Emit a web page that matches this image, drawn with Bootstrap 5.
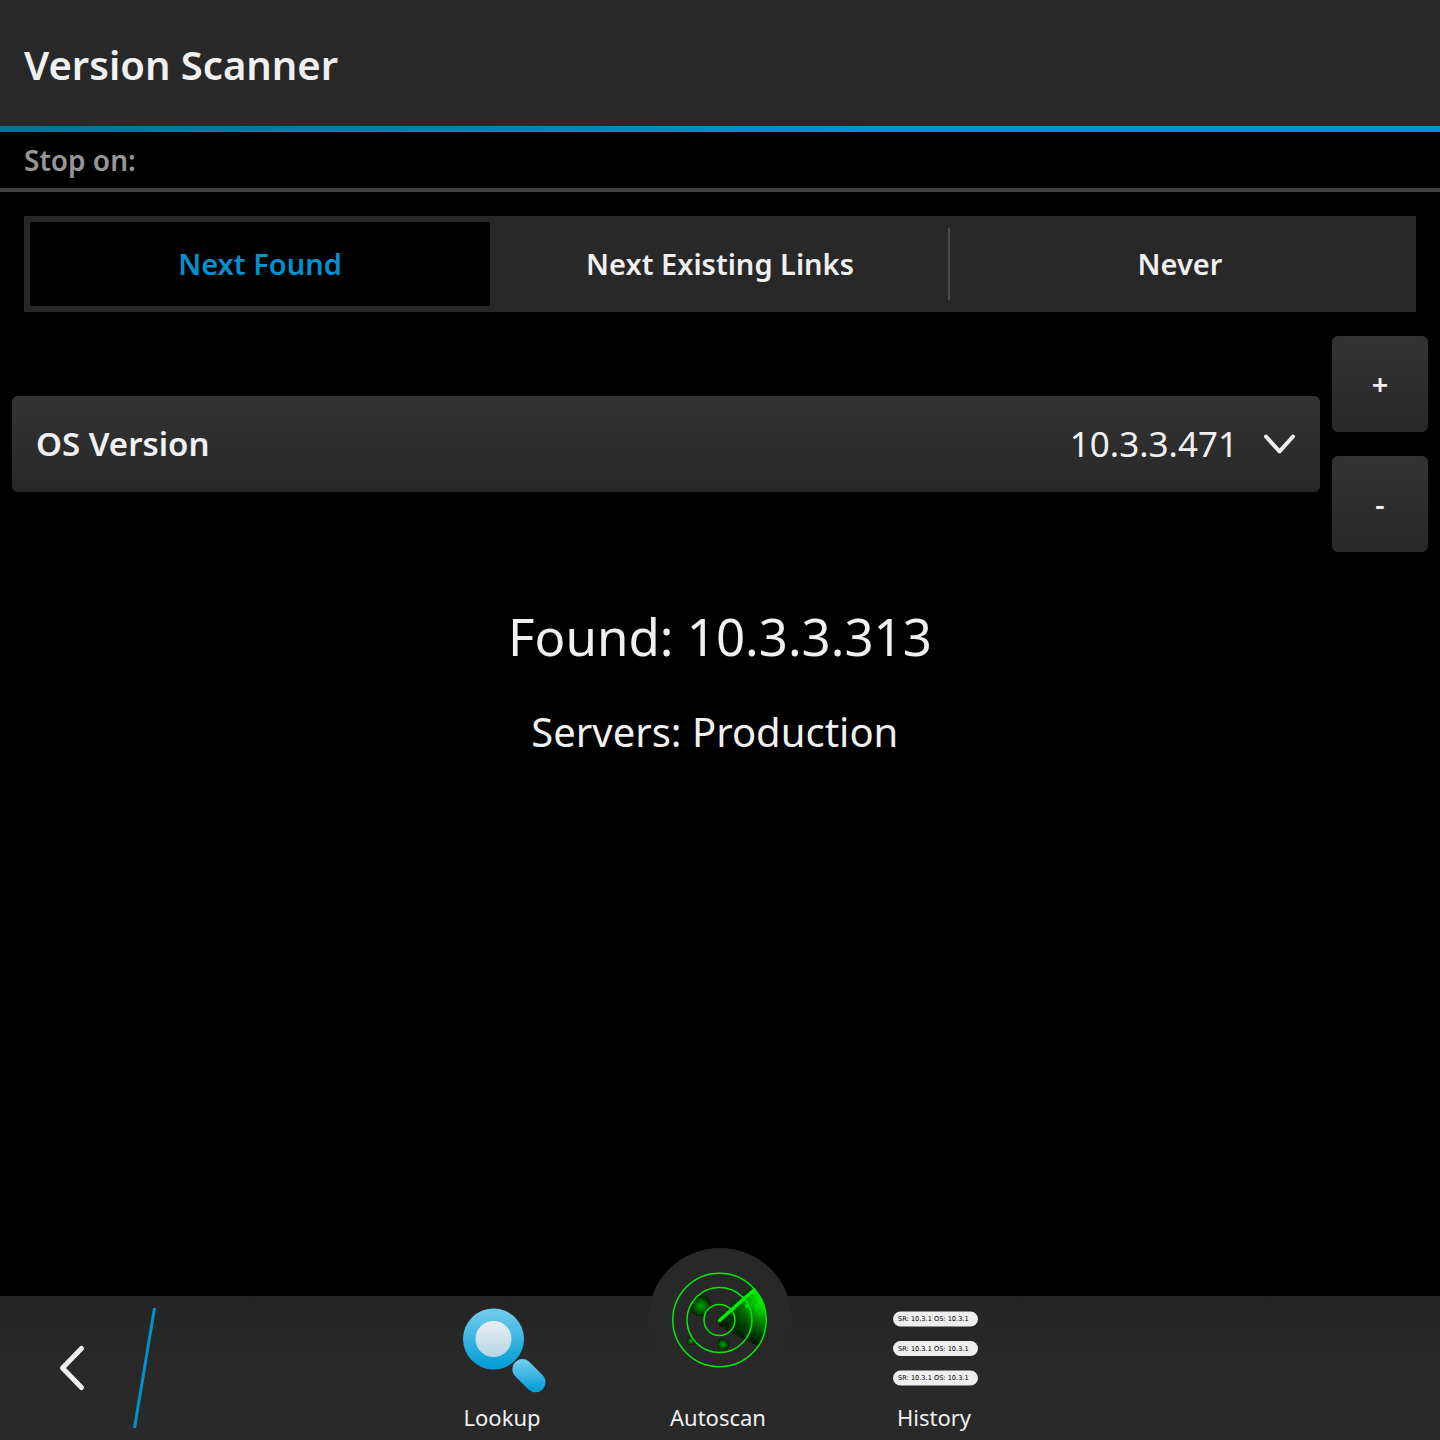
<!DOCTYPE html>
<html lang="en" data-bs-theme="dark">
<head>
<meta charset="utf-8">
<meta name="viewport" content="width=device-width, initial-scale=1">
<title>Version Scanner</title>
<link rel="stylesheet" href="https://cdn.jsdelivr.net/npm/bootstrap@5.3.0/dist/css/bootstrap.min.css">
<style>
  body { background: #000; color: #f0f0f0; font-family: "Noto Sans", "Open Sans", sans-serif; }
  .title-bar { background: #282828; padding: 35px 24px 31px; }
  .title-bar h1 { font-size: 40px; line-height: 60px; font-weight: 600; color: #f0f0f0; }
  .title-rule { height: 6px; background: linear-gradient(90deg, #087099, #0092cc 60%); }
  .section-head { font-size: 28px; line-height: 40px; font-weight: 600; color: #969696; padding: 8px 24px; border-bottom: 4px solid #404040; }
  .segments { background: #282828; padding: 6px; margin: 24px 24px 0; }
  .segment { flex: 1 1 0; position: relative; height: 84px; display: flex; align-items: center; justify-content: center; font-size: 29px; font-weight: 600; cursor: pointer; }
  .btn-check:checked + .segment { background: #000; color: #0092cc; }
  .segment.divided::after { content: ""; position: absolute; right: 0; top: 6px; bottom: 6px; width: 2px; background: #4b4b4b; }
  .picker-row { padding: 24px 12px 0; gap: 12px; }
  .raised { background: linear-gradient(#333, #282828); border: 0; border-radius: 6px; color: #f0f0f0; height: 96px; }
  .step { width: 96px; font-size: 29px; font-weight: 600; }
  .picker { padding: 0 24px; }
  .picker label { font-size: 33px; font-weight: 600; }
  .picker select { appearance: none; background: transparent; border: 0; color: inherit; font-size: 35px; height: 96px; text-align: right; text-align-last: right; padding: 0 26px 0 0; }
  .found { font-size: 51px; line-height: 72px; }
  .servers { font-size: 40px; line-height: 60px; }
  .results { padding-top: 48px; gap: 30px; }
  .action-bar { background: linear-gradient(#242424, #292929 50%); height: 144px; }
  .side { flex: 1 1 0; }
  .back { width: 156px; }
  .tab { width: 216px; height: 144px; color: #f0f0f0; font-size: 22px; line-height: 30px; padding-bottom: 8px; }
  .tab span { padding-right: 4px; }
  .tab.current svg { margin-top: -48px; }
</style>
</head>
<body class="d-flex flex-column min-vh-100">
<header>
  <div class="title-bar"><h1 class="m-0">Version Scanner</h1></div>
  <div class="title-rule"></div>
</header>

<main class="flex-grow-1">
  <h2 class="section-head m-0" id="stop">Stop on:</h2>
  <div class="segments d-flex" role="radiogroup" aria-labelledby="stop">
    <input class="btn-check" type="radio" name="stop" id="s1" checked><label class="segment" for="s1">Next Found</label>
    <input class="btn-check" type="radio" name="stop" id="s2"><label class="segment divided" for="s2">Next Existing Links</label>
    <input class="btn-check" type="radio" name="stop" id="s3"><label class="segment" for="s3">Never</label>
  </div>

  <div class="picker-row d-flex align-items-center">
    <div class="picker raised d-flex align-items-center flex-grow-1">
      <label for="os">OS Version</label>
      <select id="os" class="flex-grow-1"><option>10.3.3.471</option></select>
      <svg width="32" height="24" viewBox="0 0 32 24" fill="none" stroke="#f0f0f0" stroke-width="4" stroke-linecap="round" stroke-linejoin="round" aria-hidden="true"><path d="M2 4.500l13.500 15L29 4.500"/></svg>
    </div>
    <div class="d-flex flex-column gap-4">
      <button type="button" class="raised step">+</button>
      <button type="button" class="raised step">-</button>
    </div>
  </div>

  <div class="results d-flex flex-column text-center">
    <div class="found">Found: 10.3.3.313</div>
    <div class="servers">Servers: Production&nbsp;</div>
  </div>
</main>

<nav class="action-bar d-flex" aria-label="Actions">
  <div class="side">
    <a href="#" class="back d-block" aria-label="Back">
      <svg class="d-block" width="156" height="144" viewBox="0 0 156 144" fill="none"><path d="M81.500 52.500L62.500 72l19 19.500" stroke="#f0f0f0" stroke-width="5" stroke-linecap="round" stroke-linejoin="round"/><path d="M153 12h3L136 132h-3z" fill="#0092cc"/></svg>
    </a>
  </div>
  <a href="#" class="tab d-flex flex-column align-items-center justify-content-end text-decoration-none">
    <svg width="96" height="106" viewBox="0 0 96 106" aria-hidden="true">
      <defs>
        <linearGradient id="blue" x1="0" y1="0" x2="0" y2="1"><stop offset="0.100" stop-color="#6cc9ea"/><stop offset="0.900" stop-color="#08a0d8"/></linearGradient>
        <linearGradient id="lens" x1="0" y1="0" x2="0" y2="1"><stop offset="0" stop-color="#ebeff2"/><stop offset="1" stop-color="#b5d5e6"/></linearGradient>
      </defs>
      <circle cx="37.500" cy="43" r="30.500" fill="url(#blue)"/><circle cx="37.500" cy="43" r="18" fill="url(#lens)"/>
      <path d="M60 65.500a10 10 0 0 1 13 0L86.500 79a10 10 0 0 1-14 14.500L59.500 80.500a10 10 0 0 1 .5-15z" fill="url(#blue)"/>
    </svg>
    <span>Lookup</span>
  </a>
  <a href="#" class="tab current d-flex flex-column align-items-center justify-content-end text-decoration-none" aria-current="page">
    <svg width="144" height="154" viewBox="0 0 144 154" aria-hidden="true">
      <defs>
        <radialGradient id="blip"><stop offset="0" stop-color="#00a800"/><stop offset="0.500" stop-color="#006400"/><stop offset="1" stop-color="#001c00"/></radialGradient>
        <linearGradient id="sweep" gradientUnits="userSpaceOnUse" x1="103" y1="42" x2="97" y2="94"><stop offset="0" stop-color="#0f0"/><stop offset="0.300" stop-color="#00e000"/><stop offset="0.650" stop-color="#007000"/><stop offset="1" stop-color="#001600"/></linearGradient>
        <linearGradient id="shade" gradientUnits="userSpaceOnUse" x1="71" y1="72" x2="112" y2="72"><stop offset="0" stop-color="#001000" stop-opacity="0.900"/><stop offset="0.500" stop-color="#001000" stop-opacity="0.550"/><stop offset="1" stop-color="#001000" stop-opacity="0"/></linearGradient>
      </defs>
      <circle cx="72" cy="72" r="72" fill="#282828"/>
      <circle cx="53" cy="58" r="10.500" fill="url(#blip)"/><circle cx="43" cy="93" r="4" fill="url(#blip)"/><circle cx="75" cy="96.500" r="6" fill="url(#blip)"/>
      <path d="M71 72L105 39.500A47 47 0 0 1 110 98L71 78z" fill="url(#sweep)"/>
      <path d="M71 72L105 39.500A47 47 0 0 1 110 98L71 78z" fill="url(#shade)"/>
      <path d="M71 71.500L105 40" stroke="#003800" stroke-width="5"/><path d="M71.500 72.500L106 42" stroke="#0e0" stroke-width="3.500" stroke-linecap="round"/>
      <circle cx="99" cy="58" r="2" fill="#0d0"/>
      <g fill="none" stroke="#0e0" stroke-width="1.500"><circle cx="71.500" cy="72" r="15.500"/><circle cx="71.500" cy="72" r="32.500"/><circle cx="71.500" cy="72" r="46.700"/></g>
    </svg>
    <span>Autoscan</span>
  </a>
  <a href="#" class="tab d-flex flex-column align-items-center justify-content-end text-decoration-none">
    <svg width="96" height="106" viewBox="0 0 96 106" font-family="DejaVu Sans, sans-serif" font-size="6.600" aria-hidden="true">
      <g fill="#eee"><rect x="5" y="15.500" width="85" height="15" rx="7.500"/><rect x="5" y="45" width="85" height="15" rx="7.500"/><rect x="5" y="74.500" width="85" height="15" rx="7.500"/></g>
      <g fill="#000"><text x="10" y="25">SR: 10.3.1 OS: 10.3.1</text><text x="10" y="55">SR: 10.3.1 OS: 10.3.1</text><text x="10" y="84">SR: 10.3.1 OS: 10.3.1</text></g>
    </svg>
    <span>History</span>
  </a>
  <div class="side"></div>
</nav>
<script src="https://cdn.jsdelivr.net/npm/bootstrap@5.3.0/dist/js/bootstrap.bundle.min.js"></script>
</body>
</html>
